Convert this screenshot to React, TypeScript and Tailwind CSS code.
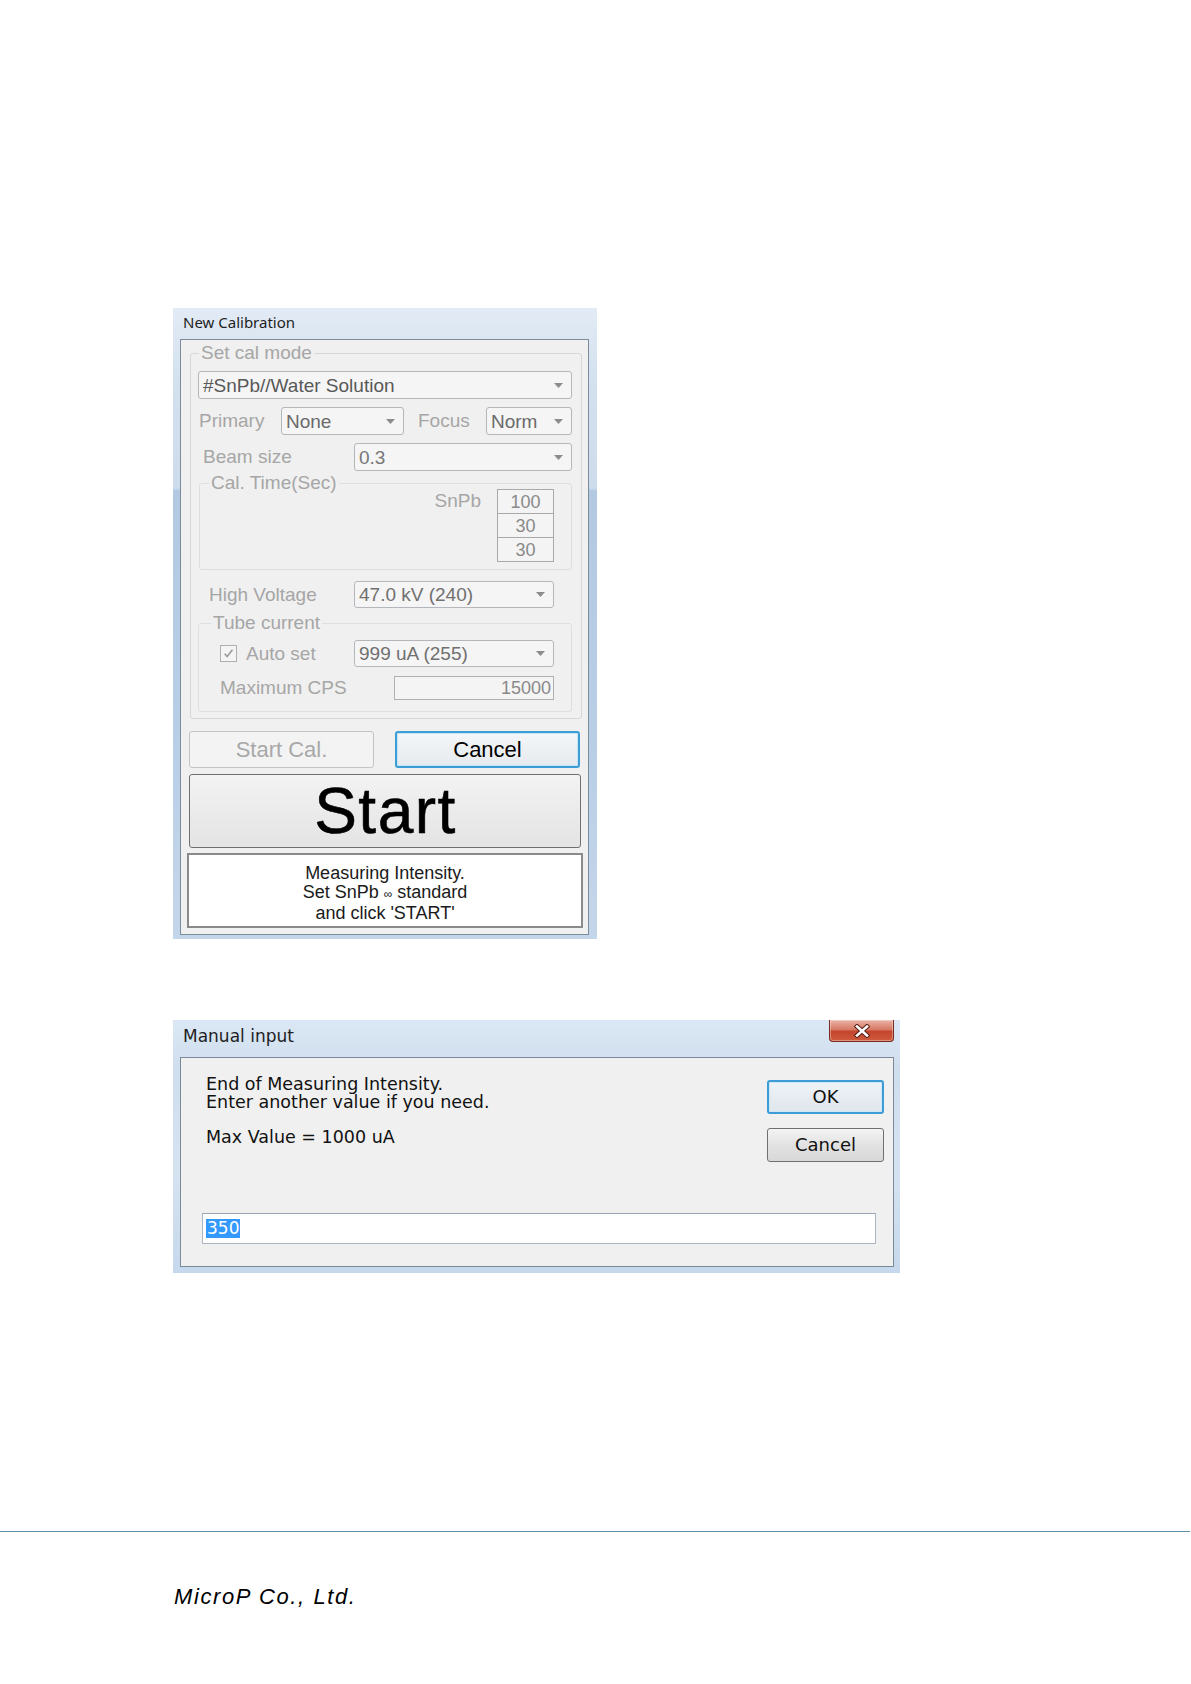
import React from "react";

const sans = "font-['Liberation_Sans',Arial,sans-serif]";
const gul = "font-['DejaVu_Sans',Verdana,sans-serif]";
const lab = "text-[19px] leading-[22px] text-[#a6a6a6] whitespace-nowrap";

function Arrow() {
  return (
    <svg width="9" height="5" viewBox="0 0 9 5" className="shrink-0">
      <path d="M0 0h9L4.5 5z" fill="#8c8c8c" />
    </svg>
  );
}

function Combo({ className, text, color }: { className: string; text: string; color?: string }) {
  return (
    <div
      className={`flex items-center justify-between rounded-[3px] border border-[#b3b7bb] bg-[#f5f5f5] pl-[4px] pr-[8px] ${className}`}
    >
      <span className={`text-[19px] leading-none whitespace-nowrap ${color ?? "text-[#6a6a6a]"}`}>{text}</span>
      <Arrow />
    </div>
  );
}

function Legend({ className, children }: { className: string; children: React.ReactNode }) {
  return <legend className={`${lab} ${className}`}>{children}</legend>;
}

function NewCalibration() {
  return (
    <div
      className={`ml-[173px] flex h-[631px] w-[424px] flex-col bg-[linear-gradient(180deg,#e2ebf5_0%,#d3e0ee_12%,#cddcec_28.5%,#b2c9e1_29%,#b9cfe6_70%,#c4d6ea_100%)] pl-[7px] pr-[8px] pb-[4px] ${sans}`}
    >
      <div className="flex h-[31px] items-center pl-[3px] pb-[2px]">
        <span className="font-['Noto_Sans',sans-serif] text-[15px] leading-none text-[#1e1e1e]">New Calibration</span>
      </div>
      <div className="flex h-[596px] flex-col border border-[#7d8c9b] bg-[#f0f0f0]">
        <fieldset className="ml-[9px] mt-[2px] w-[392px] rounded-[3px] border border-[#d3d8dc] pb-[6px]">
          <Legend className="ml-[8px] px-[2px]">Set cal mode</Legend>
          <Combo className="ml-[7px] mt-[7px] h-[28px] w-[374px]" text="#SnPb//Water Solution" color="text-[#585858]" />
          <div className="ml-[8px] mt-[8px] flex h-[28px] items-center">
            <div className={`w-[82px] ${lab}`}>Primary</div>
            <Combo className="h-[28px] w-[123px]" text="None" />
            <div className={`ml-[14px] w-[68px] ${lab}`}>Focus</div>
            <Combo className="h-[28px] w-[86px]" text="Norm" />
          </div>
          <div className="ml-[12px] mt-[8px] flex h-[28px] items-center">
            <div className={`w-[151px] ${lab}`}>Beam size</div>
            <Combo className="h-[28px] w-[218px]" text="0.3" color="text-[#777777]" />
          </div>
          <fieldset className="ml-[8px] mt-[1px] w-[373px] rounded-[3px] border border-[#dcdfe2] pb-[7px]">
            <Legend className="ml-[9px] px-[2px]">Cal. Time(Sec)</Legend>
            <div className="-mt-[5px] flex justify-end pr-[17px]">
              <div className={`mr-[16px] mt-[1px] ${lab}`}>SnPb</div>
              <div className="flex w-[57px] flex-col">
                {["100", "30", "30"].map((v, i) => (
                  <div
                    key={i}
                    className={`flex h-[25px] items-center justify-center border border-[#a9a9a9] bg-[#f4f4f4] text-[18px] leading-none text-[#8a8a8a] ${i > 0 ? "-mt-px" : ""}`}
                  >
                    {v}
                  </div>
                ))}
              </div>
            </div>
          </fieldset>
          <div className="ml-[18px] mt-[11px] flex h-[27px] items-center">
            <div className={`w-[145px] ${lab}`}>High Voltage</div>
            <Combo className="h-[27px] w-[200px]" text="47.0 kV (240)" color="text-[#707070]" />
          </div>
          <fieldset className="ml-[7px] mt-[4px] w-[374px] rounded-[3px] border border-[#dcdfe2] pb-[11px]">
            <Legend className="ml-[12px] px-[2px]">Tube current</Legend>
            <div className="ml-[21px] mt-[6px] flex h-[27px] items-center">
              <div className="flex w-[134px] items-center">
                <div className="flex h-[17px] w-[17px] items-center justify-center border border-[#b0b0b0] bg-[#f4f4f4]">
                  <svg width="11" height="11" viewBox="0 0 10 10">
                    <path d="M1.5 5.2l2.3 2.6L8.6 1.6" fill="none" stroke="#9a9a9a" strokeWidth="1.4" />
                  </svg>
                </div>
                <span className={`ml-[9px] ${lab}`}>Auto set</span>
              </div>
              <Combo className="h-[27px] w-[200px]" text="999 uA (255)" color="text-[#707070]" />
            </div>
            <div className="ml-[21px] mt-[9px] flex h-[24px] items-center">
              <div className={`w-[174px] ${lab}`}>Maximum CPS</div>
              <div className="flex h-[24px] w-[160px] items-center justify-end border border-[#b1b1b1] bg-[#f4f4f4] pr-[2px] text-[18px] leading-none text-[#8a8a8a]">
                15000
              </div>
            </div>
          </fieldset>
        </fieldset>
        <div className="ml-[8px] mt-[12px] flex">
          <div className="flex h-[37px] w-[185px] items-center justify-center rounded-[3px] border border-[#c4c4c4] bg-[#f3f3f3] text-[22px] leading-none text-[#a8a8a8]">
            Start Cal.
          </div>
          <div className="ml-[21px] flex h-[37px] w-[185px] items-center justify-center rounded-[3px] border-2 border-[#3c9ed6] bg-[linear-gradient(180deg,#f4f6f8,#e6eaee)] text-[22px] leading-none text-black shadow-[inset_0_0_0_1px_#c6e6f8]">
            Cancel
          </div>
        </div>
        <div className="ml-[8px] mt-[6px] flex h-[74px] w-[392px] items-center justify-center rounded-[3px] border border-[#707070] bg-[linear-gradient(180deg,#f3f3f3,#ebebeb_50%,#e4e4e4)]">
          <span className="pl-[1px] text-[64px] leading-none tracking-[1.5px] text-black [-webkit-text-stroke:0.6px_black]">
            Start
          </span>
        </div>
        <div className="ml-[6px] mt-[5px] flex h-[75px] w-[396px] flex-col items-center justify-center border-2 border-[#8a8a8a] bg-white pt-[5px] text-[18px] leading-[19px] text-[#1a1a1a]">
          <div>Measuring Intensity.</div>
          <div>
            Set SnPb <span className="text-[12px]">∞</span> standard
          </div>
          <div>and click &apos;START&apos;</div>
        </div>
      </div>
    </div>
  );
}

function CloseButton() {
  return (
    <div className="flex h-[22px] w-[65px] items-center justify-center rounded-b-[4px] border border-t-0 border-[#7b2b1d] bg-[linear-gradient(180deg,#eab3a5_0%,#d77a66_45%,#c4452d_55%,#cf5a3e_100%)] shadow-[inset_0_0_0_1px_rgba(255,255,255,0.35)]">
      <svg width="18" height="14" viewBox="0 0 18 14">
        <path d="M4 2.5L14 11.5M14 2.5L4 11.5" stroke="#5a2016" strokeWidth="4.6" strokeLinecap="square" />
        <path d="M4 2.5L14 11.5M14 2.5L4 11.5" stroke="#ffffff" strokeWidth="2.6" strokeLinecap="square" />
      </svg>
    </div>
  );
}

function ManualInput() {
  return (
    <div
      className={`ml-[173px] mt-[81px] flex h-[253px] w-[727px] flex-col bg-[linear-gradient(180deg,#dbe7f4_0%,#cfdeee_20%,#d5e3f1_60%,#c6d8ec_100%)] pl-[7px] pr-[6px] pb-[6px] ${gul}`}
    >
      <div className="flex h-[37px] items-start justify-between">
        <div className="flex h-[33px] items-center pl-[3px]">
          <span className="text-[17px] leading-none text-[#1e1e1e]">Manual input</span>
        </div>
        <CloseButton />
      </div>
      <div className="flex h-[210px] flex-col border border-[#7b8a98] bg-[#f0f0f0]">
        <div className="flex h-[104px] justify-between">
          <div className="ml-[25px] mt-[17px] text-[17.5px] leading-[18px] text-[#111]">
            <div>End of Measuring Intensity.</div>
            <div>Enter another value if you need.</div>
            <div className="mt-[17px]">Max Value = 1000 uA</div>
          </div>
          <div className="mr-[9px] mt-[22px] flex flex-col">
            <div className="flex h-[34px] w-[117px] items-center justify-center rounded-[3px] border-2 border-[#3d9bd6] bg-[linear-gradient(180deg,#eef3f7,#dfe6ec)] text-[18px] leading-none text-[#111] shadow-[inset_0_0_0_1px_#cde9f9]">
              OK
            </div>
            <div className="mt-[14px] flex h-[34px] w-[117px] items-center justify-center rounded-[3px] border border-[#707070] bg-[linear-gradient(180deg,#f4f4f4,#e2e2e2_50%,#d8d8d8)] text-[18px] leading-none text-[#111]">
              Cancel
            </div>
          </div>
        </div>
        <div className="ml-[21px] mt-[51px] flex h-[31px] w-[674px] items-center border border-[#abb6c2] border-t-[#9aa6b3] bg-white pl-[3px]">
          <span className="flex h-[19px] items-center bg-[#3399ff] px-[1px] text-[17px] leading-none text-white">350</span>
        </div>
      </div>
    </div>
  );
}

export default function App() {
  return (
    <div className="flex h-[1684px] w-[1191px] flex-col bg-white pt-[308px]">
      <NewCalibration />
      <ManualInput />
      <div className="mt-[258px] h-px w-[1190px] bg-[#5f8fa9]" />
      <div className={`ml-[174px] mt-[52px] text-[22px] italic leading-[26px] tracking-[1.6px] text-black ${sans}`}>
        MicroP Co., Ltd.
      </div>
    </div>
  );
}
